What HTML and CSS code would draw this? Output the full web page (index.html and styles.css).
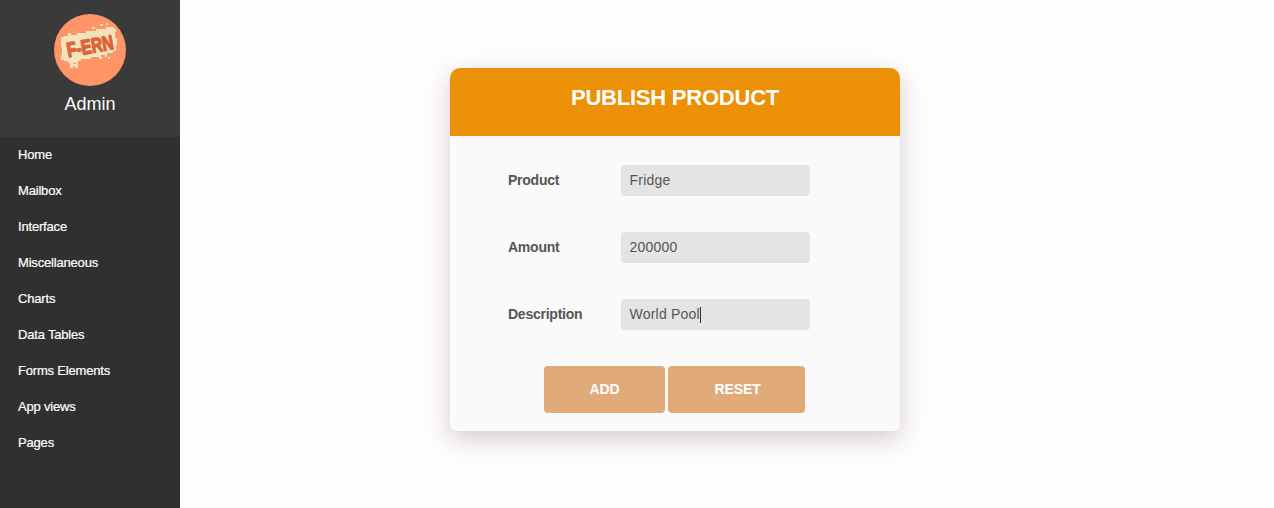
FILE: index.html
```html
<!DOCTYPE html>
<html lang="en">
<head>
<meta charset="utf-8">
<title>Publish Product</title>
<link rel="stylesheet" href="styles.css">
</head>
<body>
<aside class="sidebar">
  <header class="profile">
    <svg class="avatar" viewBox="0 0 72 72" role="img" aria-label="F-ERN">
      <circle cx="36" cy="36" r="36" fill="#ff9566"/>
      <path fill="#f3e3bb" d="M7 23h3v-1h4v-3h3v2h6v-2h9v-2h10v-2h10v-2h8v2h2v3h-1v6h2v7h-1v6h-3v2h-6v2h-6v2H37v2H27v2h-3v2H14v-2h-4v-1H7v-5h1V33H7zM16 48h3v2h3v-2h2v6h-3v-2h-2v2h-3zM46 10h3v2h-3zM52 9h2v2h-2zM38 13h3v2h-3zM45 43h3v2h-3zM51 41h2v2h-2zM54 43h2v2h-2z"/>
      <text class="logo-shadow" transform="translate(14.4 43.4) rotate(-10) scale(.75 1)">F-ERN</text>
      <text class="logo-text" transform="translate(13.8 42.8) rotate(-10) scale(.75 1)">F-ERN</text>
    </svg>
    <div class="name">Admin</div>
  </header>
  <nav class="menu">
    <a>Home</a><a>Mailbox</a><a>Interface</a><a>Miscellaneous</a><a>Charts</a><a>Data Tables</a><a>Forms Elements</a><a>App views</a><a>Pages</a>
  </nav>
</aside>
<main class="content">
  <form class="card">
    <h1 class="title">PUBLISH PRODUCT</h1>
    <div class="fields">
      <label class="field"><span class="label">Product</span><span class="input">Fridge</span></label>
      <label class="field"><span class="label">Amount</span><span class="input">200000</span></label>
      <label class="field"><span class="label">Description</span><span class="input">World Pool<i class="caret"></i></span></label>
    </div>
    <div class="actions">
      <button class="button add" type="button">ADD</button>
      <button class="button reset" type="button">RESET</button>
    </div>
  </form>
</main>
</body>
</html>
```
FILE: styles.css
```css
* { box-sizing: border-box; }
body {
  margin: 0;
  height: 508px;
  display: flex;
  overflow: hidden;
  background: #fffdfb;
  font-family: "Liberation Sans", Arial, sans-serif;
}
.sidebar { width: 180px; height: 508px; background: #303030; color: #fff; }
.profile {
  height: 137px;
  padding-top: 14px;
  display: flex;
  flex-direction: column;
  align-items: center;
  background: #3a3a3a;
}
.avatar { width: 72px; height: 72px; }
.logo-text, .logo-shadow { font-weight: bold; font-size: 20.5px; stroke-width: .6px; }
.logo-text { fill: #e6623a; stroke: #e6623a; }
.logo-shadow { fill: #b9582f; stroke: #b9582f; }
.name { margin-top: 7px; font-size: 18px; line-height: 22px; }
.menu { display: flex; flex-direction: column; }
.menu a {
  height: 36px;
  padding-left: 18px;
  font-size: 13px;
  line-height: 35px;
  letter-spacing: -.18px;
  -webkit-text-stroke: .2px #fff;
}
.content { flex: 1; display: flex; justify-content: center; align-items: flex-start; padding: 68px 104px 0 0; }
.card {
  width: 450px;
  height: 363px;
  border-radius: 10px 10px 6px 6px;
  background: #fafafa;
  box-shadow: 0 8px 24px rgba(30, 20, 30, .2);
}
.title {
  height: 68px;
  margin: 0;
  border-radius: 10px 10px 0 0;
  background: #ec9106;
  color: #fff;
  text-align: center;
  font-size: 22px;
  line-height: 59px;
  letter-spacing: -.23px;
}
.fields { display: flex; flex-direction: column; gap: 36px; padding: 29px 90px 0 58px; }
.field { display: flex; height: 31px; font-size: 14px; line-height: 31px; color: #555; }
.label { width: 113px; font-weight: bold; letter-spacing: -.24px; }
.input {
  display: flex;
  align-items: center;
  width: 189px;
  padding-left: 8.5px;
  border-radius: 4px;
  background: #e4e4e4;
  letter-spacing: .22px;
}
.caret { width: 1px; height: 16px; background: #333; }
.actions { display: flex; gap: 3px; padding: 36px 0 0 94px; }
.button {
  height: 47px;
  padding: 0 0 2px;
  border: 0;
  border-radius: 4px;
  background: #e1aa79;
  color: #fff;
  font: bold 14px "Liberation Sans", Arial, sans-serif;
  letter-spacing: -.1px;
}
.add { width: 121px; }
.reset { width: 137px; padding-left: 2px; }
```
